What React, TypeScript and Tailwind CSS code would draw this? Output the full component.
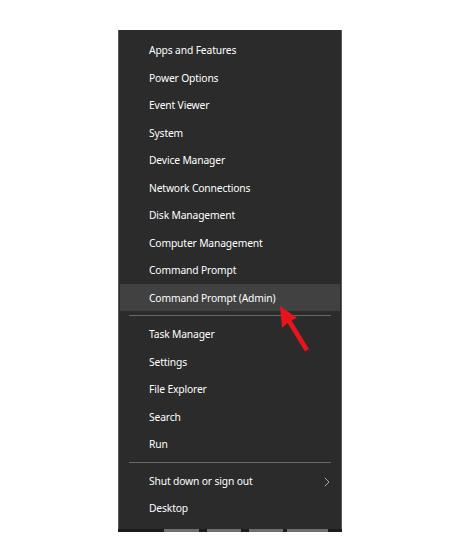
import React from "react";

const group1 = [
  "Apps and Features",
  "Power Options",
  "Event Viewer",
  "System",
  "Device Manager",
  "Network Connections",
  "Disk Management",
  "Computer Management",
  "Command Prompt",
];
const group2 = ["Task Manager", "Settings", "File Explorer", "Search", "Run"];

function Item({ label, active }: { label: string; active?: boolean }) {
  return (
    <div
      className={
        "h-[27.5px] flex items-center pl-[29px] pt-[2.5px] mx-[1px] text-[10.3px] tracking-[-0.15px] text-white " +
        (active ? "bg-[#414141]" : "")
      }
    >
      {label}
    </div>
  );
}

function Sep() {
  return <div className="h-[9px] flex items-center px-[10px]"><div className="h-px w-full bg-[#676767]" /></div>;
}

export default function App() {
  return (
    <div className="w-[450px] h-[542px] bg-white relative" style={{ fontFamily: '"Noto Sans", sans-serif' }}>
      <div className="pt-[30px] pl-[118px]">
        <div className="w-[224px] bg-[#2b2b2b] border-x border-[#5a5a5a] pt-[6px] pb-[7.5px]">
          {group1.map((l) => (
            <Item key={l} label={l} />
          ))}
          <Item label="Command Prompt (Admin)" active />
          <Sep />
          {group2.map((l) => (
            <Item key={l} label={l} />
          ))}
          <Sep />
          <div className="h-[27.5px] flex items-center pl-[29px] pt-[2.5px] pr-[10px] mx-[1px] text-[10.3px] tracking-[-0.15px] text-white justify-between">
            <span>Shut down or sign out</span>
            <svg width="6" height="10" viewBox="0 0 6 10" fill="none">
              <path d="M0.8 0.8 L5 5 L0.8 9.2" stroke="#b8a4a4" strokeWidth="1" />
            </svg>
          </div>
          <Item label="Desktop" />
        </div>
        <div className="w-[224px] h-[3px] bg-[#1c1c1c] flex">
          <div className="w-[46px]" />
          <div className="w-[35px] bg-[#6e6e6e]" />
          <div className="w-[8px]" />
          <div className="w-[34px] bg-[#6e6e6e]" />
          <div className="w-[8px]" />
          <div className="w-[34px] bg-[#6e6e6e]" />
          <div className="w-[4px]" />
          <div className="w-[41px] bg-[#6e6e6e]" />
        </div>
      </div>
      <svg className="absolute left-[270px] top-[300px]" width="44" height="56" viewBox="0 0 44 56">
        <path d="M10 6 L27 18 L21.5 20.5 L39 49 L35 51.5 L17.5 23 L12 28 Z" fill="#e8141b" />
      </svg>
    </div>
  );
}
